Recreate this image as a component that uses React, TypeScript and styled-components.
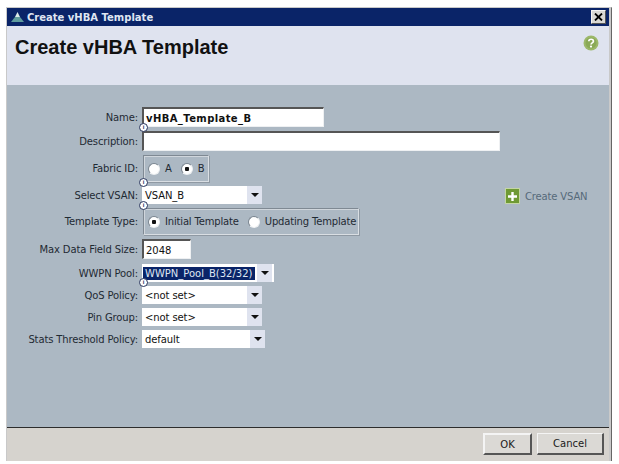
import React from 'react';
import styled, { createGlobalStyle } from 'styled-components';

const Global = createGlobalStyle`
  html, body {
    margin: 0;
    padding: 0;
    background: #fff;
  }
  * { box-sizing: border-box; }
`;

const Page = styled.div`
  width: 619px;
  height: 464px;
  padding: 7px 7px 0 6px;
  background: #fff;
  overflow: hidden;
  font-family: Tahoma, "DejaVu Sans", sans-serif;
`;

const Dialog = styled.div`
  height: 454px;
  display: flex;
  flex-direction: column;
  padding-right: 2px;
  background: #c9c9c9;
  border-top: 1px solid #c9c9c9;
  border-left: 1px solid #c9c9c9;
  border-right: 1px solid #666;
`;

const TitleBar = styled.div`
  height: 18px;
  flex: none;
  display: flex;
  align-items: center;
  gap: 2px;
  padding: 0 3px 0 3px;
  background: #0a2468;
  color: #dfe6f2;
  font-size: 10px;
  font-weight: 700;
`;

const TitleText = styled.span`
  flex: 1;
`;

const CloseButton = styled.div`
  width: 15px;
  height: 14px;
  display: flex;
  align-items: center;
  justify-content: center;
  background: #d9d8d4;
  border: 1px solid #f4f4f4;
  border-right-color: #555;
  border-bottom-color: #555;
`;

const Header = styled.div`
  height: 59px;
  flex: none;
  display: flex;
  justify-content: space-between;
  padding: 9px 10px 0 8px;
  background: #dfe3ef;
`;

const Heading = styled.h1`
  margin: 0;
  font-family: "Liberation Sans", Arial, sans-serif;
  font-size: 20px;
  line-height: 24px;
  font-weight: 700;
  color: #111;
`;

const Body = styled.div`
  flex: 1;
  position: relative;
  display: flex;
  flex-direction: column;
  padding-top: 21px;
  background: #acb8c3;
`;

const Row = styled.div<{ $h: number }>`
  height: ${(p) => p.$h}px;
  display: grid;
  grid-template-columns: 131px auto;
  column-gap: 4px;
  justify-content: start;
  align-items: center;
`;

const Label = styled.label`
  text-align: right;
  font-size: 10px;
  letter-spacing: -0.13px;
  color: #1f2a33;
  white-space: nowrap;
`;

const Input = styled.div<{ $w: number; $bold?: boolean }>`
  width: ${(p) => p.$w}px;
  height: 20px;
  padding: 1px 0 0 2px;
  display: flex;
  align-items: center;
  background: #fff;
  border: 1px solid #eef0f2;
  border-top: 2px solid #555;
  border-left: 2px solid #555;
  font-size: 10px;
  font-weight: ${(p) => (p.$bold ? 700 : 400)};
  letter-spacing: ${(p) => (p.$bold ? '0.4px' : '0')};
  color: #111;
`;

const RadioGroup = styled.div<{ $w: number }>`
  width: ${(p) => p.$w}px;
  height: 27px;
  margin-left: 1px;
  display: flex;
  align-items: center;
  padding-left: 4px;
  gap: 9px;
  border: 1px solid #7f8993;
  border-right-color: #d9dee3;
  border-bottom-color: #d9dee3;
  box-shadow: inset 1px 1px 0 #d0d6dc, 1px 1px 0 #8f99a3;
  font-size: 10px;
  letter-spacing: -0.17px;
  color: #1f2a33;
`;

const RadioItem = styled.span`
  display: inline-flex;
  align-items: center;
  gap: 5px;
`;

const RadioDot = styled.span<{ $on?: boolean }>`
  width: 12px;
  height: 12px;
  border-radius: 50%;
  background: radial-gradient(circle, ${(p) => (p.$on ? '#111 0 2px, #fff 2.5px' : '#fff 0 3px, #fff 4px')});
  border: 1px solid #7c8791;
  border-right-color: #eef0f2;
  border-bottom-color: #eef0f2;
`;

const Select = styled.div<{ $w: number }>`
  width: ${(p) => p.$w}px;
  height: 18px;
  display: flex;
  align-items: center;
  background: #fff;
  font-size: 10px;
  color: #111;
`;

const SelectText = styled.span<{ $selected?: boolean }>`
  flex: 1;
  margin-left: 2px;
  padding: 1px 1px;
  white-space: nowrap;
  letter-spacing: -0.1px;
  ${(p) => p.$selected && 'flex: none; letter-spacing: 0; background: #0a2468; color: #dfe6f2; margin: 0 2px 0 1px; padding: 1px 3px 1px 2px;'}
`;

const Arrow = styled.span`
  width: 15px;
  height: 18px;
  flex: none;
  display: flex;
  align-items: center;
  justify-content: center;
  background: #dfe3ef;

  &::after {
    content: '';
    border-left: 4px solid transparent;
    border-right: 4px solid transparent;
    border-top: 4px solid #111;
  }
`;

const InfoMark = styled.span<{ $top: number }>`
  position: absolute;
  left: 132px;
  top: ${(p) => p.$top}px;
  width: 9px;
  height: 9px;
  border-radius: 50%;
  background: #fff;
  border: 1px solid #27345c;
  color: #27345c;
  font-size: 6px;
  line-height: 7px;
  font-weight: 700;
  text-align: center;
  font-family: "Liberation Sans", sans-serif;
`;

const CreateLink = styled.a`
  position: absolute;
  left: 498px;
  top: 103px;
  display: flex;
  align-items: center;
  gap: 5px;
  font-size: 10px;
  letter-spacing: -0.15px;
  color: #566a7a;
`;

const PlusIcon = styled.span`
  width: 15px;
  height: 16px;
  display: flex;
  align-items: center;
  justify-content: center;
  background: #6f9a34;
  border: 1px solid #c4d6a4;
`;

const Footer = styled.div`
  height: 34px;
  flex: none;
  display: flex;
  justify-content: flex-end;
  align-items: flex-start;
  gap: 5px;
  padding: 5px 5px 0 0;
  background: #d6d3ce;
  border-top: 1px solid #2d2d2d;
`;

const Button = styled.button<{ $primary?: boolean; $w: number }>`
  width: ${(p) => p.$w}px;
  height: 22px;
  padding: 0;
  background: #dbd9d5;
  border: ${(p) => (p.$primary ? '2px' : '1px')} solid #f4f4f4;
  border-right: 2px solid #555;
  border-bottom: 2px solid #555;
  font-family: Tahoma, "DejaVu Sans", sans-serif;
  font-size: 10px;
  color: #1a1a1a;
`;

export default function App() {
  return (
    <Page>
      <Global />
      <Dialog>
        <TitleBar>
          <svg width="15" height="13" viewBox="0 0 15 13">
            <path d="M7.5 1 L10 6 L5 6 Z" fill="#dcebe8" />
            <path d="M5 6 L10 6 L14 11 L1 11 Z" fill="#5f9c9e" />
          </svg>
          <TitleText>Create vHBA Template</TitleText>
          <CloseButton>
            <svg width="9" height="8" viewBox="0 0 9 8">
              <path d="M1 0.5 L8 7.5 M8 0.5 L1 7.5" stroke="#000" strokeWidth="1.8" />
            </svg>
          </CloseButton>
        </TitleBar>
        <Header>
          <Heading>Create vHBA Template</Heading>
          <svg width="16" height="16" viewBox="0 0 16 16">
            <circle cx="8" cy="8" r="7.5" fill="#9cb86a" />
            <circle cx="8" cy="8" r="5.5" fill="#8aa957" />
            <path d="M5.8 6.2 C5.8 3.6 10.4 3.6 10.4 6.2 C10.4 8 8 7.8 8 9.6" fill="none" stroke="#fff" strokeWidth="1.7" />
            <circle cx="8" cy="11.6" r="1.1" fill="#fff" />
          </svg>
        </Header>
        <Body>
          <Row $h={22}>
            <Label>Name:</Label>
            <Input $w={182} $bold>vHBA_Template_B</Input>
          </Row>
          <Row $h={26}>
            <Label>Description:</Label>
            <Input $w={358} />
          </Row>
          <Row $h={29}>
            <Label>Fabric ID:</Label>
            <RadioGroup $w={66}>
              <RadioItem><RadioDot />A</RadioItem>
              <RadioItem><RadioDot $on />B</RadioItem>
            </RadioGroup>
          </Row>
          <Row $h={24}>
            <Label>Select VSAN:</Label>
            <Select $w={120}><SelectText>VSAN_B</SelectText><Arrow /></Select>
          </Row>
          <Row $h={29}>
            <Label>Template Type:</Label>
            <RadioGroup $w={216}>
              <RadioItem><RadioDot $on />Initial Template</RadioItem>
              <RadioItem><RadioDot />Updating Template</RadioItem>
            </RadioGroup>
          </Row>
          <Row $h={26}>
            <Label>Max Data Field Size:</Label>
            <Input $w={49}>2048</Input>
          </Row>
          <Row $h={22}>
            <Label>WWPN Pool:</Label>
            <Select $w={132}><SelectText $selected>WWPN_Pool_B(32/32)</SelectText><Arrow /></Select>
          </Row>
          <Row $h={22}>
            <Label>QoS Policy:</Label>
            <Select $w={120}><SelectText>&lt;not set&gt;</SelectText><Arrow /></Select>
          </Row>
          <Row $h={22}>
            <Label>Pin Group:</Label>
            <Select $w={120}><SelectText>&lt;not set&gt;</SelectText><Arrow /></Select>
          </Row>
          <Row $h={22}>
            <Label>Stats Threshold Policy:</Label>
            <Select $w={123}><SelectText>default</SelectText><Arrow /></Select>
          </Row>
          <InfoMark $top={38}>i</InfoMark>
          <InfoMark $top={93}>i</InfoMark>
          <InfoMark $top={116}>i</InfoMark>
          <InfoMark $top={193}>i</InfoMark>
          <CreateLink>
            <PlusIcon>
              <svg width="11" height="11" viewBox="0 0 11 11">
                <path d="M5.5 1 V10 M1 5.5 H10" stroke="#fff" strokeWidth="2.4" />
              </svg>
            </PlusIcon>
            Create VSAN
          </CreateLink>
        </Body>
        <Footer>
          <Button $primary $w={49}>OK</Button>
          <Button $w={67}>Cancel</Button>
        </Footer>
      </Dialog>
    </Page>
  );
}
